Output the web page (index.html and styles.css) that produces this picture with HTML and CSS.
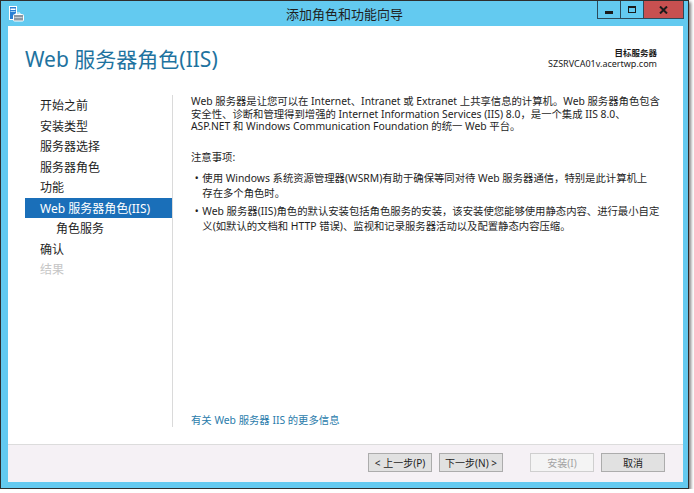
FILE: index.html
```html
<!DOCTYPE html>
<html lang="zh-CN">
<head>
    <meta charset="UTF-8">
    <title>添加角色和功能向导</title>
<link rel="stylesheet" href="styles.css">
</head>
<body>
    <div class="window">
        <div class="titlebar">
            <div class="app-icon">
                <svg width="16" height="16" viewBox="0 0 16 16">
                    <rect x="1.5" y="0.5" width="7" height="13" fill="#2a7fd4" stroke="#fff"/>
                    <rect x="2.5" y="2.5" width="5" height="1.5" fill="#fff"/>
                    <rect x="2.5" y="5" width="5" height="1" fill="#9fd0f5"/>
                    <path d="M8 8.5v-1.5h4v1.5" fill="none" stroke="#fff" stroke-width="1"/>
                    <rect x="5.5" y="8.5" width="10" height="6.5" rx="1" fill="#8c98a4" stroke="#fff"/>
                    <rect x="6.5" y="11" width="8" height="1" fill="#c5ccd3"/>
                </svg>
            </div>
            <div class="title">添加角色和功能向导</div>
            <div class="caption-btns">
                <span class="cbtn min"><i></i></span>
                <span class="cbtn max"><i></i></span>
                <span class="cbtn close">
                    <svg width="9" height="8" viewBox="0 0 9 8">
                        <path d="M1 0.5l7 7M8 0.5l-7 7" stroke="#1b1b1b" stroke-width="2"/>
                    </svg>
                </span>
            </div>
        </div>

        <div class="client">
            <div class="header">
                <h1>Web 服务器角色(IIS)</h1>
                <div class="target">
                    <div class="target-label">目标服务器</div>
                    <div>SZSRVCA01v.acertwp.com</div>
                </div>
            </div>

            <div class="main">
                <ul class="steps">
                    <li>开始之前</li>
                    <li>安装类型</li>
                    <li>服务器选择</li>
                    <li>服务器角色</li>
                    <li>功能</li>
                    <li class="active">Web 服务器角色(IIS)</li>
                    <li class="sub">角色服务</li>
                    <li>确认</li>
                    <li class="disabled">结果</li>
                </ul>

                <div class="content">
                    <p class="intro">Web 服务器是让您可以在 Internet、Intranet 或 Extranet 上共享信息的计算机。Web 服务器角色包含<br>安全性、诊断和管理得到增强的 Internet Information Services (IIS) 8.0，是一个集成 IIS 8.0、<br>ASP.NET 和 Windows Communication Foundation 的统一 Web 平台。</p>

                    <p class="notes-title">注意事项:</p>
                    <ul class="notes">
                        <li><span>使用 Windows 系统资源管理器(WSRM)有助于确保等同对待 Web 服务器通信，特别是此计算机上<br>存在多个角色时。</span></li>
                        <li><span>Web 服务器(IIS)角色的默认安装包括角色服务的安装，该安装使您能够使用静态内容、进行最小自定<br>义(如默认的文档和 HTTP 错误)、监视和记录服务器活动以及配置静态内容压缩。</span></li>
                    </ul>

                    <a class="more-link" href="#">有关 Web 服务器 IIS 的更多信息</a>
                </div>
            </div>

            <div class="footer">
                <button class="btn">&lt; 上一步(P)</button>
                <button class="btn">下一步(N) &gt;</button>
                <button class="btn install" disabled>安装(I)</button>
                <button class="btn">取消</button>
            </div>
        </div>
    </div>
</body>
</html>
```

FILE: styles.css
```css
body {
    margin: 0;
    background: #fff;
    font-family: "Noto Sans", "Noto Sans CJK SC", sans-serif;
    color: #1e1e1e;
}

.window {
    width: 689px;
    height: 489px;
    box-sizing: border-box;
    border: 1px solid #2e2e2e;
    background: #63caf0;
    display: flex;
    flex-direction: column;
    box-shadow: 2px 2px 3px rgba(0, 0, 0, 0.5);
}

/* title bar */
.titlebar {
    height: 25px;
    flex: none;
    display: grid;
    grid-template-columns: 1fr auto 1fr;
    align-items: start;
}

.app-icon {
    padding: 4px 0 0 7px;
    height: 16px;
}

.title {
    font-size: 13px;
    line-height: 15px;
    padding-top: 6px;
    color: #1f1f1f;
}

.caption-btns {
    justify-self: end;
    display: flex;
    margin-right: 4px;
}

.cbtn {
    width: 22px;
    height: 17px;
    border-right: 1px solid #2c4a5a;
    border-bottom: 1px solid #2c4a5a;
    display: flex;
    align-items: center;
    justify-content: center;
}

.cbtn.min {
    border-left: 1px solid #2c4a5a;
}

.cbtn.min i {
    width: 8px;
    height: 3px;
    background: #1b1b1b;
    margin-top: 5px;
}

.cbtn.max i {
    width: 6px;
    height: 4px;
    border: 1px solid #1b1b1b;
    border-top-width: 2px;
}

.cbtn.close {
    width: 39px;
    background: #c75050;
}

/* client area */
.client {
    flex: 1;
    margin: 0 5px 6px 7px;
    background: #fff;
    display: flex;
    flex-direction: column;
}

.header {
    height: 62px;
    box-sizing: border-box;
    display: flex;
    justify-content: space-between;
    align-items: flex-start;
    padding: 20px 26px 0 17px;
}

.header h1 {
    margin: 0;
    font-size: 21px;
    font-weight: normal;
    line-height: 26px;
    color: #1e73a0;
}

.target {
    text-align: right;
    font-size: 9px;
    line-height: 10.5px;
    padding-top: 2px;
    color: #1a1a1a;
}

.target-label {
    font-size: 8.5px;
    font-weight: bold;
}

.main {
    flex: 1;
    display: flex;
    padding: 7px 0 17px 17px;
}

.steps {
    list-style: none;
    margin: 0;
    padding: 0;
    width: 147px;
    border-right: 1px solid #dadada;
    font-size: 12px;
}

.steps li {
    height: 20.5px;
    line-height: 21.5px;
    padding-left: 15px;
}

.steps li.active {
    background: #1a6fb9;
    color: #fff;
}

.steps li.sub {
    padding-left: 31px;
}

.steps li.disabled {
    color: #c6c6c6;
}

.content {
    flex: 1;
    display: flex;
    flex-direction: column;
    padding: 0 8px 0 18px;
    font-size: 10.35px;
    white-space: nowrap;
}

.intro {
    margin: 0;
    line-height: 12.6px;
}

.notes-title {
    margin: 18.7px 0 0;
    line-height: 12.6px;
}

.notes {
    list-style: none;
    margin: 6.8px 0 0;
    padding: 0;
    line-height: 14.8px;
}

.notes li {
    display: flex;
}

.notes li + li {
    margin-top: 4px;
}

.notes li::before {
    content: "•";
    flex: none;
    width: 11.3px;
    text-align: center;
}

.more-link {
    margin-top: auto;
    line-height: 14px;
    color: #2b7cab;
    text-decoration: none;
}

/* bottom buttons */
.footer {
    height: 38px;
    flex: none;
    box-sizing: border-box;
    border-top: 1px solid #dcdcdc;
    background: #f5f1f5;
    display: flex;
    justify-content: flex-end;
    align-items: flex-start;
    gap: 7px;
    padding: 8px 18px 0 0;
}

.btn,
.btn:hover,
.btn:focus {
    width: 64px;
    height: 19px;
    box-sizing: border-box;
    padding: 0;
    border: 1px solid #acacac;
    background: #e1e1e1;
    outline: none;
    font-family: inherit;
    font-size: 10px;
    color: #1e1e1e;
}

.btn.install {
    margin-left: 20px;
}

.btn:disabled {
    background: #f4f4f4;
    border-color: #cfcfcf;
    color: #a3a3a3;
}
```
